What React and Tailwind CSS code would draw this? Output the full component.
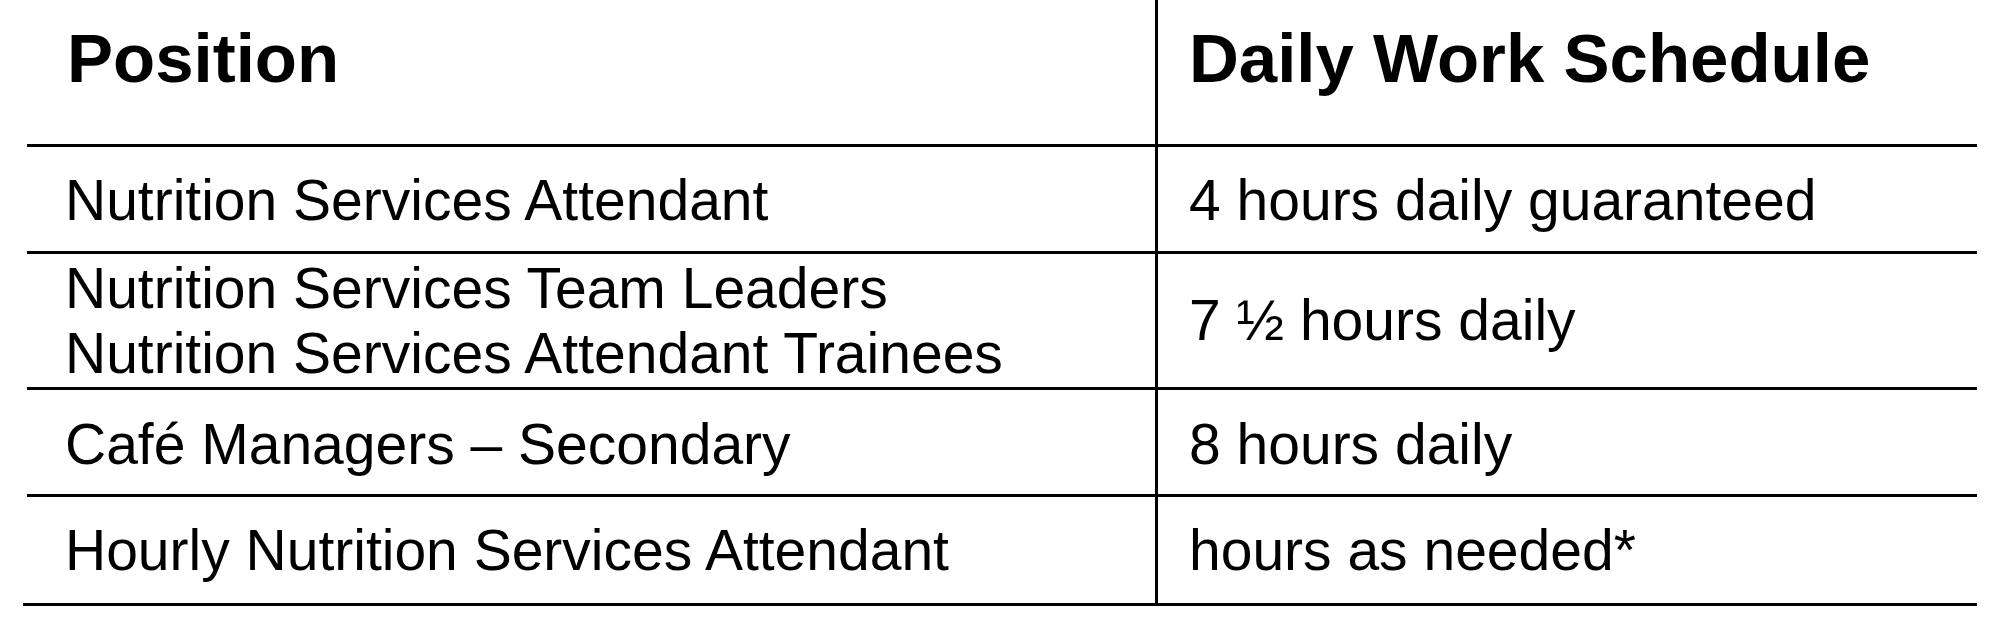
export default function App() {
    const rows = [
        { left: ['Nutrition Services Attendant'], right: '4 hours daily guaranteed', h: 'h-[107px]', pt: 'pt-[21px]' },
        { left: ['Nutrition Services Team Leaders', 'Nutrition Services Attendant Trainees'], right: '7 ½ hours daily', h: 'h-[136px]', pt: 'pt-[2px]' },
        { left: ['Café Managers – Secondary'], right: '8 hours daily', h: 'h-[107px]', pt: 'pt-[22px]' },
        { left: ['Hourly Nutrition Services Attendant'], right: 'hours as needed*', h: 'h-[106px]', pt: 'pt-[21px]', last: true },
    ]

    return (
        <div className="w-[2000px] h-[621px] bg-white text-black font-['Liberation_Sans',Arial,sans-serif]">
            <div className="ml-[27px] w-[1950px]">
                {/* Header */}
                <div className="flex h-[147px] border-b-[3px] border-black">
                    <div className="w-[1131px] border-r-[3px] border-black pl-[40px] pt-[19px] text-[69px] leading-[79px] font-bold">
                        Position
                    </div>
                    <div className="flex-1 pl-[31px] pt-[19px] text-[69px] leading-[79px] font-bold">
                        Daily Work Schedule
                    </div>
                </div>

                {/* Rows */}
                {rows.map((row, i) => (
                    <div key={i} className={`flex ${row.h} ${row.last ? '' : 'border-b-[3px] border-black'} text-[57px] leading-[65px]`}>
                        <div className={`w-[1131px] border-r-[3px] border-black pl-[38px] ${row.pt}`}>
                            {row.left.map((line, j) => (
                                <div key={j}>{line}</div>
                            ))}
                        </div>
                        <div className={`flex-1 pl-[31px] flex ${row.left.length > 1 ? 'items-center' : row.pt}`}>
                            <div>{row.right}</div>
                        </div>
                    </div>
                ))}

                {/* bottom rule runs a little further left */}
                <div className="-ml-[4px] w-[1954px] h-[3px] bg-black" />
            </div>
        </div>
    )
}
